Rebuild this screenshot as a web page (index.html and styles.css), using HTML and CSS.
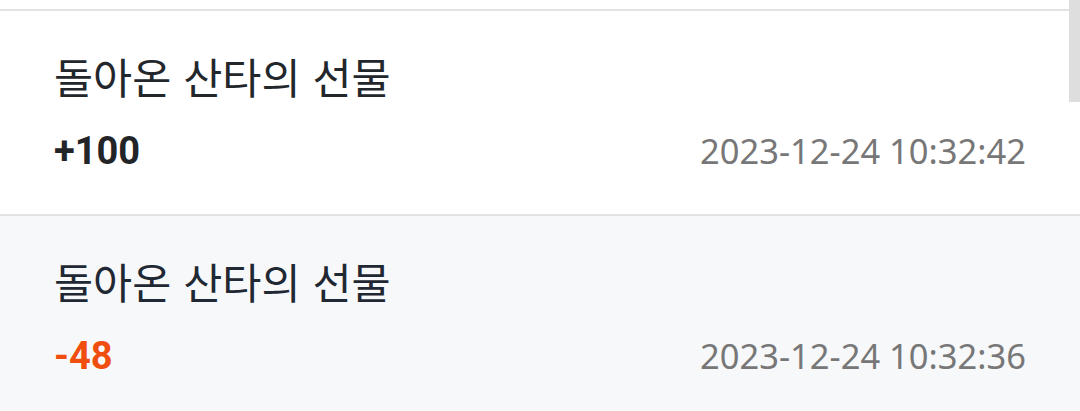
FILE: index.html
```html
<!DOCTYPE html>
<html lang="ko">
<head>
    <meta charset="UTF-8">
    <meta name="viewport" content="width=device-width, initial-scale=1.0">
    <title>포인트 내역</title>
    <link rel="stylesheet" href="styles.css">
</head>
<body>
    <div class="scroll-thumb"></div>
    <ul class="history">
        <li class="item">
            <p class="title">돌아온 산타의 선물</p>
            <div class="meta">
                <span class="amount">+100</span>
                <span class="date">2023-12-24 10:32:42</span>
            </div>
        </li>
        <li class="item item-alt">
            <p class="title">돌아온 산타의 선물</p>
            <div class="meta">
                <span class="amount minus">-48</span>
                <span class="date">2023-12-24 10:32:36</span>
            </div>
        </li>
    </ul>
</body>
</html>
```

FILE: styles.css
```css
body {
    margin: 0;
    background-color: #ffffff;
    font-family: "Noto Sans CJK KR", "Noto Sans", sans-serif;
    overflow: hidden;
}
.scroll-thumb {
    position: absolute;
    top: 0;
    right: 0;
    width: 11px;
    height: 102px;
    background-color: #dedede;
}
.history {
    list-style: none;
    margin: 9px 0 0 0;
    padding: 0;
}
.item {
    border-top: 2px solid #e2e2e2;
    padding: 40px 54px 0 54px;
    height: 163px;
}
.item-alt {
    background-color: #f7f8fa;
    height: 300px;
}
.title {
    margin: 0;
    font-size: 42.5px;
    line-height: 50px;
    color: #23272c;
}
.item-alt .title {
    color: #1f2833;
}
.meta {
    display: flex;
    justify-content: space-between;
    align-items: baseline;
    margin-top: 28px;
    line-height: 44px;
}
.amount {
    font-family: Roboto, "Noto Sans", sans-serif;
    font-weight: bold;
    font-size: 38px;
    color: #222428;
}
.amount.minus {
    color: #f04e0e;
}
.date {
    font-family: "Noto Sans", "Open Sans", sans-serif;
    font-size: 34.5px;
    color: #777777;
}
```
